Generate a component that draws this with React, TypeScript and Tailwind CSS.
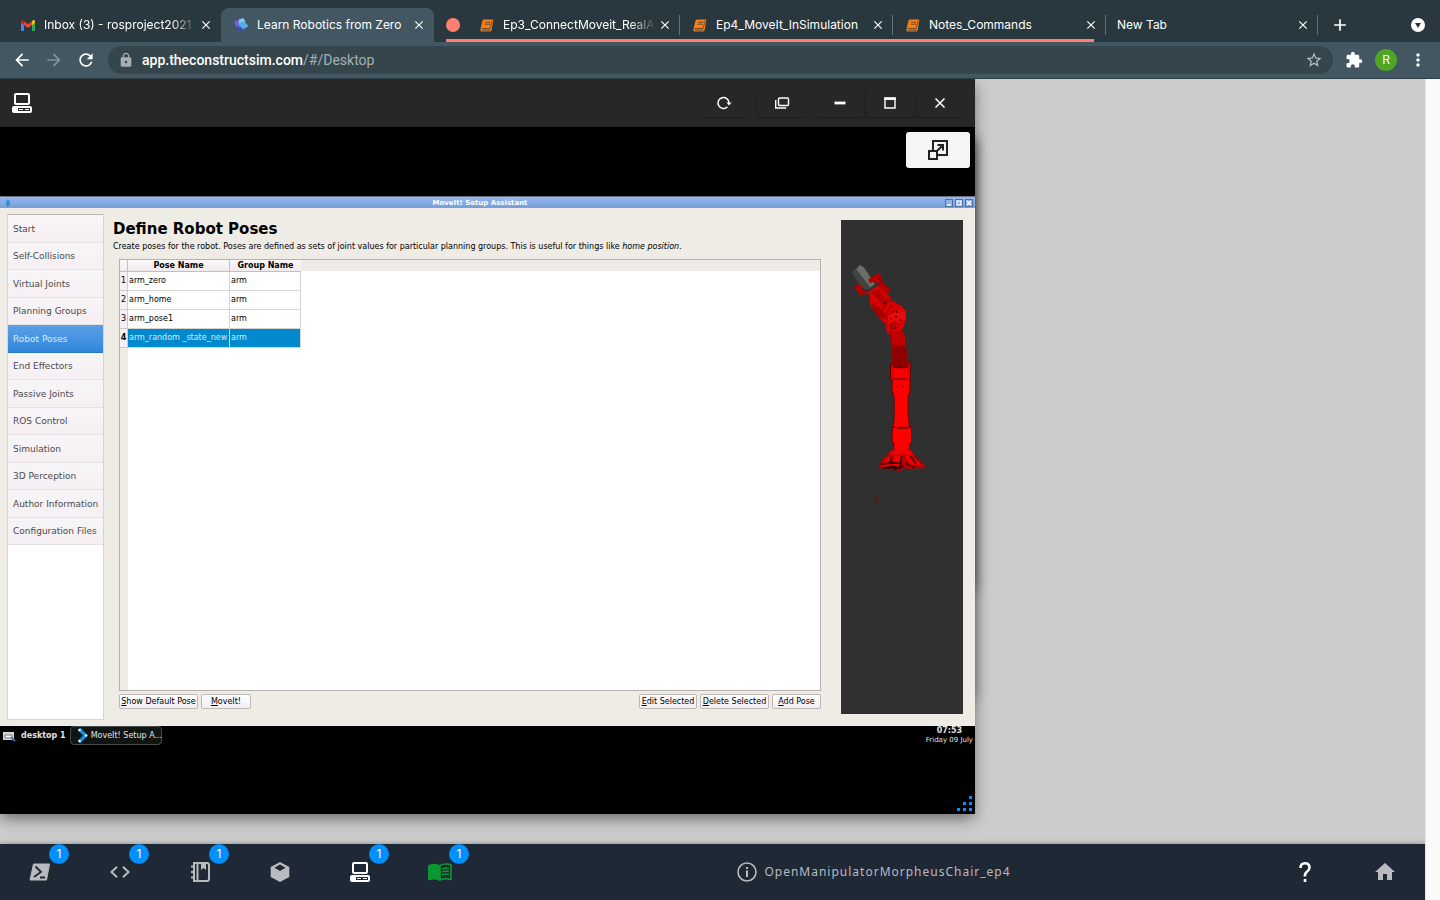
import React from "react";
import { MdArrowBack, MdArrowForward, MdRefresh, MdLock, MdStarBorder, MdExtension, MdMoreVert, MdHome, MdClose, MdAdd } from "react-icons/md";

type IconProps = { className?: string };

const GmailIcon = () => (
  <svg viewBox="0 0 14 11" className="h-[11px] w-[14px] shrink-0" aria-hidden="true">
    <path d="M0 2v8q0 1 1 1h2V4z" fill="#4285f4" />
    <path d="M14 2v8q0 1-1 1h-2V4z" fill="#34a853" />
    <path d="M11 1.2V5l3-2.200V1.600C14 .3 12.600-.3 11.600.4z" fill="#fbbc04" />
    <path d="M0 1.600V2.800L3 5V1.200L2.400.4C1.400-.3 0 .3 0 1.600z" fill="#c5221f" />
    <path d="M3 5V1.200l4 3 4-3V5L7 8z" fill="#ea4335" />
  </svg>
);

const ConstructIcon = () => (
  <svg viewBox="0 0 16 16" className="size-4 shrink-0" aria-hidden="true">
    <path d="M1 5l5-2.500L10.500 1l2 4L15.500 9l-3.500 3-6 2.500L3.500 10z" fill="#3f62c6" />
    <path d="M1 5l5-2.500-.5 6L3 10z" fill="#7a5bd0" />
    <path d="M6 2.500L10.500 1l2 4-3.500 3-3.500-1z" fill="#83c6ee" />
    <path d="M6 6l5-1.500L15.500 9 11 12 6 9.500z" fill="#5badde" />
    <path d="M3.500 10l4-.5 2 3.500L6 14.500z" fill="#3a4fb8" />
  </svg>
);

const BookIcon = () => (
  <svg viewBox="0 0 14 13" className="h-[13px] w-[14px] shrink-0" aria-hidden="true">
    <path d="M4 .5h8.500q1 0 .8 1L11.500 11.500q-.2 1-1.200 1H1.500Q0 12.300.4 10.500L2.500 1.700Q2.800.5 4 .5z" fill="#ff7f0e" />
    <path d="M5 3.200h5.500M4.500 5.200H10M1.500 9.500h8.500l2.300-8M2 11.200h8.500" stroke="#29373e" strokeWidth=".7" fill="none" />
  </svg>
);

const DesktopIcon = ({ className }: IconProps) => (
  <svg viewBox="0 0 20 20" className={className} aria-hidden="true">
    <rect x="3" y="1" width="14" height="10" rx="1" fill="none" stroke="currentColor" strokeWidth="2" />
    <path fillRule="evenodd" d="M2 13h16a2 2 0 0 1 2 2v3a2 2 0 0 1-2 2H2a2 2 0 0 1-2-2v-3a2 2 0 0 1 2-2zm4 2v3h12v-3z" fill="currentColor" />
    <path d="M7 16h4v1H7zM13 16h4v1h-4z" fill="currentColor" />
  </svg>
);

const TerminalIcon = ({ className }: IconProps) => (
  <svg viewBox="0 0 22 18" className={className} aria-hidden="true">
    <path d="M4.500 1H20.500L17.500 17H1z" fill="currentColor" stroke="currentColor" strokeWidth="1" strokeLinejoin="round" />
    <path d="M6.500 3.500L12 9l-7 5M11 14.500h5" fill="none" stroke="#1f2835" strokeWidth="1.800" />
  </svg>
);

const CodeIcon = ({ className }: IconProps) => (
  <svg viewBox="0 0 20 12" className={className} aria-hidden="true">
    <path d="M7 .8L1.500 6 7 11.200M13 .8L18.500 6 13 11.200" fill="none" stroke="currentColor" strokeWidth="2" />
  </svg>
);

const NotebookIcon = ({ className }: IconProps) => (
  <svg viewBox="0 0 20 20" className={className} aria-hidden="true">
    <path d="M4 1h13q2 0 2 2v14q0 2-2 2H4zM7.500 1v18" fill="none" stroke="currentColor" strokeWidth="2" />
    <path d="M11 1h5v7l-2.500-2L11 8zM1 3.500h4v2H1zM1 9h4v2H1zM1 14.500h4v2H1z" fill="currentColor" />
  </svg>
);

const CubeIcon = ({ className }: IconProps) => (
  <svg viewBox="0 0 20 20" className={className} aria-hidden="true">
    <path fillRule="evenodd" d="M10 0l9.300 5v10L10 20 .7 15V5zm0 2.600L4.500 5.800 10 9l5.500-3.200z" fill="currentColor" />
  </svg>
);

const OpenBookIcon = ({ className }: IconProps) => (
  <svg viewBox="0 0 24 18" className={className} aria-hidden="true">
    <path d="M1 2Q7-.5 12 2.500V18Q7 15.500 0 17.500V2.500z" fill="currentColor" />
    <path d="M12 2.500Q17-.3 23 2v14.500Q17 14.500 12 17z" fill="none" stroke="currentColor" strokeWidth="1.600" />
    <path d="M14 6q3.500-1.500 7-.6M14 9q3.500-1.500 7-.6M14 12q3.500-1.500 7-.6" fill="none" stroke="currentColor" strokeWidth="1.500" />
  </svg>
);

const TabClose = () => (
  <button aria-label="Close tab" className="flex size-4 shrink-0 items-center justify-center text-white">
    <MdClose className="size-[14px]" />
  </button>
);

type TabProps = { title: string; icon?: React.ReactNode; active?: boolean; fade?: boolean; separator?: boolean };

const Tab = ({ title, icon, active, fade, separator }: TabProps) => (
  <div
    className={`mt-2 flex w-[213px] min-w-0 items-center pr-[7px] pl-3 ${active ? "rounded-t-lg bg-[#425761]" : ""} ${separator ? "relative after:absolute after:top-[7px] after:right-0 after:h-5 after:w-px after:bg-[#627279]" : ""}`}
  >
    {icon && <span className="mr-[9px] flex w-[15px] shrink-0 justify-center">{icon}</span>}
    <span className={`flex-1 text-[12px] whitespace-nowrap text-white ${fade ? "[mask-image:linear-gradient(to_right,black_82%,transparent)]" : ""}`}>
      {title}
    </span>
    <TabClose />
  </div>
);

const TabStrip = () => (
  <div className="flex h-[42px] bg-[#29373e]">
    <div className="flex pl-2">
      <Tab title="Inbox (3) - rosproject2021" icon={<GmailIcon />} fade />
      <Tab title="Learn Robotics from Zero" icon={<ConstructIcon />} active />
    </div>
    <div className="ml-3 flex shadow-[inset_0_-3px_#ff8073]">
      <span className="mt-[18px] mr-[7px] size-[14px] rounded-full bg-[#ff8073]" />
      <Tab title="Ep3_ConnectMoveit_RealA" icon={<BookIcon />} fade separator />
      <Tab title="Ep4_MoveIt_InSimulation" icon={<BookIcon />} separator />
      <div className="-mr-3 flex">
        <Tab title="Notes_Commands" icon={<BookIcon />} separator />
      </div>
    </div>
    <div className="ml-[11px] flex">
      <Tab title="New Tab" separator />
    </div>
    <button aria-label="New tab" className="mt-2 ml-[5px] flex size-[34px] items-center justify-center text-white">
      <MdAdd className="size-5" />
    </button>
    <button aria-label="Search tabs" className="mt-[18px] mr-[15px] ml-auto size-[14px] rounded-full bg-white">
      <svg viewBox="0 0 14 14" className="size-[14px]" aria-hidden="true">
        <path d="M4 5h6L7 10z" fill="#29373e" />
      </svg>
    </button>
  </div>
);

const Toolbar = () => (
  <div className="flex h-[37px] items-center border-b border-[#2d3e46] bg-[#425761] pl-3 text-white">
    <button aria-label="Back" className="mr-3"><MdArrowBack className="size-5" /></button>
    <button aria-label="Forward" className="mr-3 text-[#83939a]"><MdArrowForward className="size-5" /></button>
    <button aria-label="Reload"><MdRefresh className="size-5" /></button>
    <div className="ml-3 flex h-7 flex-1 items-center rounded-full bg-[#34454c] px-2.5 font-[Roboto,sans-serif] text-[14px]">
      <MdLock className="mr-2 size-4 text-[#a6afb3]" />
      <a href="#/Desktop" className="text-[#a5b0b5]">
        <span className="font-medium text-white">app.theconstructsim.com</span>/#/Desktop
      </a>
      <button aria-label="Bookmark" className="ml-auto text-[#b8c0c4]"><MdStarBorder className="size-[18px]" /></button>
    </div>
    <button aria-label="Extensions" className="ml-3"><MdExtension className="size-[18px]" /></button>
    <button aria-label="Profile" className="ml-3 size-[22px] rounded-full bg-[#4fa524] text-[12px]">R</button>
    <button aria-label="Menu" className="mr-3 ml-[11px]"><MdMoreVert className="size-5" /></button>
  </div>
);

const WindowButton = ({ label, children }: { label: string; children: React.ReactNode }) => (
  <button aria-label={label} className="flex h-7 w-[50px] items-center justify-center rounded text-white shadow-[0_1px_2px_rgba(0,0,0,0.3)]">
    <svg viewBox="0 0 16 16" className="size-4" fill="none" stroke="currentColor" aria-hidden="true">{children}</svg>
  </button>
);

const WindowHeader = () => (
  <header className="flex h-12 items-center bg-[#272727] pr-[10px] pl-3">
    <DesktopIcon className="size-5 text-white" />
    <div className="ml-auto flex">
      <div className="mr-2"><WindowButton label="Reload">
        <path d="M11.500 11.800A5.500 5.500 0 1 1 13 8" strokeWidth="1.400" />
        <path d="M10.500 7.500h5L13 10.500z" fill="currentColor" stroke="none" />
      </WindowButton></div>
      <div className="mr-2"><WindowButton label="Duplicate">
        <rect x="4.500" y="3" width="10" height="7.500" rx="1" strokeWidth="1.400" />
        <path d="M1.700 5v8h10.500" strokeWidth="1.400" />
      </WindowButton></div>
      <WindowButton label="Minimise"><path d="M2.500 8h11" strokeWidth="2.800" /></WindowButton>
      <WindowButton label="Maximise"><path d="M3 2.500v10.500h10V2.500M2.300 4h11.400" strokeWidth="1.400" /><path d="M2.300 3.500h11.400" strokeWidth="2.600" /></WindowButton>
      <WindowButton label="Close"><path d="M3.500 3.500l9 9M12.500 3.500l-9 9" strokeWidth="1.500" /></WindowButton>
    </div>
  </header>
);

const steps = ["Start", "Self-Collisions", "Virtual Joints", "Planning Groups", "Robot Poses", "End Effectors", "Passive Joints", "ROS Control", "Simulation", "3D Perception", "Author Information", "Configuration Files"];

const StepList = () => (
  <nav className="w-[97px] shrink-0 border border-t-[#bcb8b5] border-r-[#d8d4d0] border-b-[#d8d4d0] border-l-[#d8d4d0] bg-white">
    <div className="grid h-[330px] grid-rows-12">
      {steps.map((step) => (
        <a
          key={step}
          href="#step"
          className={`flex items-center border-b pt-[2px] pl-[5px] text-[9px] leading-[11px] whitespace-nowrap ${step === "Robot Poses" ? "border-[#2774c8] bg-linear-to-b from-[#5b9fe6] to-[#2f86dc] text-[#dbeaf8]" : "border-[#e4dfe2] bg-linear-to-b from-[#f7f5f7] to-[#f6eff4] text-[#4a4a4a]"}`}
        >
          {step}
        </a>
      ))}
    </div>
  </nav>
);

const poses = ["arm_zero", "arm_home", "arm_pose1", "arm_random _state_new"];

const PoseTable = () => (
  <div className="flex flex-1 flex-col border border-[#b5b1ae] bg-white">
    <div className="relative flex-1 bg-linear-to-r from-[#efebe7] from-[8px] to-white to-[8px]">
      <div className="absolute inset-x-0 top-0 h-[11px] bg-[#efebe6]" />
      <table className="relative w-[181px] table-fixed border-separate border-spacing-0 text-[8px] leading-[10px] text-black">
        <colgroup>
          <col className="w-2" />
          <col className="w-[102px]" />
          <col className="w-[71px]" />
        </colgroup>
        <thead>
          <tr className="h-3 bg-linear-to-b from-[#fbf9fa] to-[#efe9ec]">
            <td className="border-r border-b border-[#c4bfc0] p-0" />
            <th scope="col" className="border-r border-b border-[#c4bfc0] p-0 pt-px">Pose Name</th>
            <th scope="col" className="border-b border-[#c4bfc0] p-0 pt-px">Group Name</th>
          </tr>
        </thead>
        <tbody>
          {poses.map((pose, i) => {
            const selected = i === 3;
            return (
              <tr key={pose} className={`h-[19px] ${selected ? "bg-[#008acd] text-[#d5ecf8]" : "bg-white"}`}>
                <th scope="row" className={`border-r border-b border-[#d0cccc] bg-[#f5f0f3] p-0 text-black ${selected ? "font-bold" : "font-medium"}`}>{i + 1}</th>
                <td className="border-r border-b border-[#d6d3d3] p-0 pl-px whitespace-nowrap">{pose}</td>
                <td className="border-r border-b border-[#d6d3d3] p-0 pl-px">arm</td>
              </tr>
            );
          })}
        </tbody>
      </table>
    </div>
  </div>
);

const QtButton = ({ label, className }: { label: string; className: string }) => (
  <button className={`h-[15px] rounded-[2px] border border-[#bdb8b5] bg-linear-to-b from-white to-[#f3edf0] text-[8px] leading-[13px] whitespace-nowrap text-black ${className}`}>
    <u>{label[0]}</u>{label.slice(1)}
  </button>
);

const RobotView = () => (
  <svg viewBox="63 90 366 1482" className="h-[494px] w-[122px] shrink-0 bg-[#303030]" role="img" aria-label="Robot arm">
    <path d="M97 248L120 225 164 283 147 298 127 294z" fill="#555957" />
    <path d="M97 248l10-14 44 57-5 7-19-5z" fill="#414443" />
    <path d="M109 238l11-13 12 7 32 50-14 9z" fill="#696d6a" />
    <path d="M145 268l30-19 11 10-3 11 30 30-14 10-18-23-18-13-14 6zM101 292l16-9 11 6-5 10 15 3 12 10-28 3z" fill="#b50000" />
    <path d="M147 303l31-18 24 23 13 22 32 20 11 14v24l-7 22-12 20-38 2-3-29-27-27-19-28z" fill="#d80000" />
    <path d="M160 340l16 12 16 18 15 15-18 1-15-9-20-29z" fill="#a90000" />
    <path d="M160 304l16-8 14 24 15 9-15 18-13-13z" fill="#b00000" />
    <path d="M202 376l35-18 19 5 1 25-24 15-25 11z" fill="#e80b08" />
    <path d="M148 300l24 22M175 286l24 27M208 333l-24 29M185 360l23-34 9 14-21 35M202 376l33-18M206 381l31 23M173 261l18 25 20 11M153 352l30 32" stroke="#700" strokeWidth="2" fill="none" />
    <circle cx="219" cy="408" r="9" fill="#ba0000" stroke="#700" strokeWidth="3" />
    <g fill="#550000"><circle cx="231" cy="366" r="3" /><circle cx="245" cy="364" r="2" /><circle cx="228" cy="380" r="3" /><circle cx="215" cy="352" r="3" /><circle cx="195" cy="338" r="3" /><circle cx="242" cy="390" r="3" /></g>
    <path d="M209 423h43l6 40 4 38 6 30H212l3-42z" fill="#a40000" />
    <path d="M212 427h39l6 42-16 9-22-12z" fill="#c20000" />
    <path d="M220 467h37l4 60h-47z" fill="#8e0000" />
    <path d="M211 520l9 10h42l6-18 4 6-1 56-11 2-1-35h-37l-1 33-9-5z" fill="#e00000" stroke="#620000" strokeWidth="3" />
    <path d="M221 535h40v31h-40zM217 570h52v35l-5 12-1 45 5 50h-47l4-50-2-50-7-14z" fill="#f00" />
    <path d="M218 570l-3 38 7 18 1 43-3 42M270 570v34l-6 18v43l4 46M223 567h36M219 533h44" stroke="#800000" strokeWidth="3" fill="none" />
    <path d="M217 712h57l1 45-5 5-5-2v32h-43v-33l-6-2z" fill="#f00" stroke="#750000" strokeWidth="3" />
    <path d="M224 715h43v61h-43z" fill="#f00" />
    <path d="M230 588h5M246 589h5M230 716h35M219 782h48" stroke="#780000" strokeWidth="3" />
    <path d="M207 786h70l9 12 30 30-1 6-41 2 2 5-21-8-15 10-42-7-20-2-3-8z" fill="#b90000" />
    <path d="M219 779l52 1 9 14H207zM208 799l8-2-8 30-27 2zM226 796l12 1 3 31-28 2zM253 797l20 0 31 27-33 1z" fill="#f40000" />
    <path d="M183 823l34-6 29 4M190 836l28-8 26 7M215 796l-6 25M246 794l-8 42M271 799l18 24M255 818l29 15M221 840l31-13" stroke="#400" strokeWidth="5" />
    <path d="M169 915v28M250 897h6" stroke="#810000" strokeWidth="2" />
  </svg>
);

const TitleBar = () => (
  <div className="flex h-3 items-center border-t border-[#6c7180] bg-linear-to-b from-[#95b7f0] to-[#759fda] pr-[2px] pl-1">
    <svg viewBox="0 0 8 10" className="h-2 w-2" aria-hidden="true"><path d="M4 1v8M2 3l2-2 2 2M1 5h6M2 7l2 2 2-2" stroke="#0786bf" strokeWidth="1.200" fill="none" /></svg>
    <h1 className="flex-1 pl-[3px] text-center text-[7px] leading-[10px] font-bold text-white">MoveIt! Setup Assistant</h1>
    <div className="flex gap-[2px]">
      {["M2 6h4", "M2 2h4v4H2z", "M2 2l4 4M6 2L2 6"].map((d, i) => (
        <button key={d} aria-label={["Minimise", "Restore", "Close"][i]} className="size-2 border border-[#50719f] bg-[#91b2e8]">
          <svg viewBox="1 1 6 6" className="size-[6px]" aria-hidden="true"><path d={d} stroke="white" strokeWidth="1.200" fill="none" /></svg>
        </button>
      ))}
    </div>
  </div>
);

const SetupAssistant = () => (
  <section className="font-['DejaVu_Sans',sans-serif]">
    <TitleBar />
    <div className="flex h-[518px] bg-[#efebe5] pt-[6px] pr-3 pb-[6px] pl-[7px]">
      <StepList />
      <div className="ml-[9px] flex min-w-0 flex-1 flex-col pt-[7px] pb-[11px]">
        <h2 className="text-[15px] leading-[17px] font-bold text-black">Define Robot Poses</h2>
        <p className="mt-[3px] text-[8px] leading-[11px] whitespace-nowrap text-black">
          Create poses for the robot. Poses are defined as sets of joint values for particular planning groups. This is useful for things like <i>home position</i>.
        </p>
        <div className="mt-[7px] mr-5 ml-[6px] flex flex-1 flex-col">
          <PoseTable />
          <div className="mt-[3px] flex gap-[3px]">
            <QtButton label="Show Default Pose" className="w-[79px]" />
            <QtButton label="MoveIt!" className="w-[50px]" />
            <QtButton label="Edit Selected" className="ml-auto w-[58px]" />
            <QtButton label="Delete Selected" className="w-[69px]" />
            <QtButton label="Add Pose" className="w-[49px]" />
          </div>
        </div>
      </div>
      <div className="flex pt-[6px]"><RobotView /></div>
    </div>
    <div className="flex h-[19px] items-center bg-black text-[8px] text-[#e2e2e2]">
      <svg viewBox="0 0 14 12" className="ml-[2px] h-3 w-[14px]" aria-hidden="true">
        <path d="M1 2h11v8H1z" fill="#d5d5d5" /><path d="M3 5h7v3H3z" fill="#fff" stroke="#777" /><path d="M9 7l4 4" stroke="#4676bd" strokeWidth="2" />
      </svg>
      <b className="ml-[5px]">desktop 1</b>
      <button className="ml-1 flex h-[19px] w-[92px] items-center gap-[3px] rounded border border-[#454b49] bg-[#101513] pl-[6px] whitespace-nowrap">
        <svg viewBox="0 0 11 15" className="h-[15px] w-[11px] shrink-0" aria-hidden="true">
          <path d="M2 1l6.500 6.500L2 14" stroke="#168fd1" strokeWidth="3.500" fill="none" /><g fill="#dff4ff"><circle cx="2.500" cy="2" r="1.300" /><circle cx="9" cy="7.500" r="1.300" /><circle cx="2.500" cy="13" r="1.300" /></g>
        </svg>
        MoveIt! Setup A...
      </button>
      <div className="mr-[2px] ml-auto text-center text-[7px] leading-[9px]"><b className="text-[8px]">07:53</b><br />Friday 09 July</div>
    </div>
  </section>
);

const RemoteWindow = () => (
  <div className="relative w-[975px] max-w-full">
    <div className="absolute inset-x-0 top-[58px] h-[452px] shadow-[0_2px_12px_rgba(0,0,0,0.45)]" />
    <div className="absolute inset-x-0 top-[58px] h-[560px] shadow-[0_2px_12px_rgba(0,0,0,0.35)]" />
    <main className="relative h-[735px] bg-black shadow-[0_5px_14px_-1px_rgba(0,0,0,0.5)]">
      <WindowHeader />
      <div className="flex h-[69px] justify-end pt-[5px] pr-[5px]">
        <button aria-label="Open in new window" className="flex h-9 w-16 items-center justify-center rounded-[3px] bg-[#f5f5f5]">
          <svg viewBox="0 0 20 20" className="size-5" fill="none" stroke="#222" strokeWidth="2" aria-hidden="true">
            <path d="M5 10V1h14v14h-9M1 11h8v8H1zM8 12l7-7M9.500 5H15v5.500" />
          </svg>
        </button>
      </div>
      <SetupAssistant />
      <svg viewBox="0 0 15 15" className="absolute right-[3px] bottom-[3px] size-[15px]" fill="#0090ff" aria-hidden="true">
        <path d="M12 0h3v3h-3zM6 6h3v3H6zM12 6h3v3h-3zM0 12h3v3H0zM6 12h3v3H6zM12 12h3v3h-3z" />
      </svg>
    </main>
  </div>
);

const DockButton = ({ label, badge, className, children }: { label: string; badge?: boolean; className: string; children: React.ReactNode }) => (
  <button aria-label={label} className={`relative flex h-14 w-20 items-center justify-center ${className}`}>
    {children}
    {badge && <span className="absolute top-0 right-[11px] flex size-5 items-center justify-center rounded-full bg-[#0090ff] text-[12px] text-white">1</span>}
  </button>
);

const Dock = () => (
  <footer className="relative mt-auto flex h-14 items-center bg-[#1f2835] text-[#b9bbc0] shadow-[0_-1px_4px_rgba(0,0,0,0.25)]">
    <DockButton label="Shell" badge className="text-[#b9bbc0]"><TerminalIcon className="h-[18px] w-[22px]" /></DockButton>
    <DockButton label="Code" badge className="text-[#b9bbc0]"><CodeIcon className="h-3 w-5" /></DockButton>
    <DockButton label="Notebook" badge className="text-[#b9bbc0]"><NotebookIcon className="size-5" /></DockButton>
    <DockButton label="Simulation" className="text-[#b9bbc0]"><CubeIcon className="size-5" /></DockButton>
    <DockButton label="Desktop" badge className="text-white"><DesktopIcon className="size-5" /></DockButton>
    <DockButton label="Course" badge className="text-[#0b9833]"><OpenBookIcon className="h-[18px] w-6" /></DockButton>
    <div className="flex flex-1 items-center justify-center gap-[7px] pl-[3px] font-['Noto_Sans',sans-serif] text-[12px] tracking-[1px]">
      <svg viewBox="0 0 20 20" className="size-5" fill="none" stroke="currentColor" strokeWidth="1.600" aria-hidden="true">
        <circle cx="10" cy="10" r="9" /><path d="M10 8.500V15M10 5v2" strokeWidth="2" />
      </svg>
      OpenManipulatorMorpheusChair_ep4
    </div>
    <DockButton label="Help" className="text-white">
      <svg viewBox="0 0 12 20" className="h-5 w-3" fill="none" stroke="currentColor" strokeWidth="2.600" aria-hidden="true">
        <path d="M1.500 6Q1.500 1.300 6 1.300t4.500 4.300Q10.500 8 8 9.800T6 14.500M6 17v3" />
      </svg>
    </DockButton>
    <DockButton label="Home" className="text-[#b9bbc0]"><MdHome className="size-6" /></DockButton>
  </footer>
);

export default function App() {
  return (
    <div className="flex min-h-screen flex-col bg-[#ccc] font-[Inter,sans-serif]">
      <TabStrip />
      <Toolbar />
      <div className="flex flex-1 overflow-hidden">
        <div className="flex min-w-0 flex-1 flex-col">
          <RemoteWindow />
          <Dock />
        </div>
        <div className="relative w-[15px] shrink-0 border-l border-[#e4e4e4] bg-[#fafafa]" />
      </div>
    </div>
  );
}
